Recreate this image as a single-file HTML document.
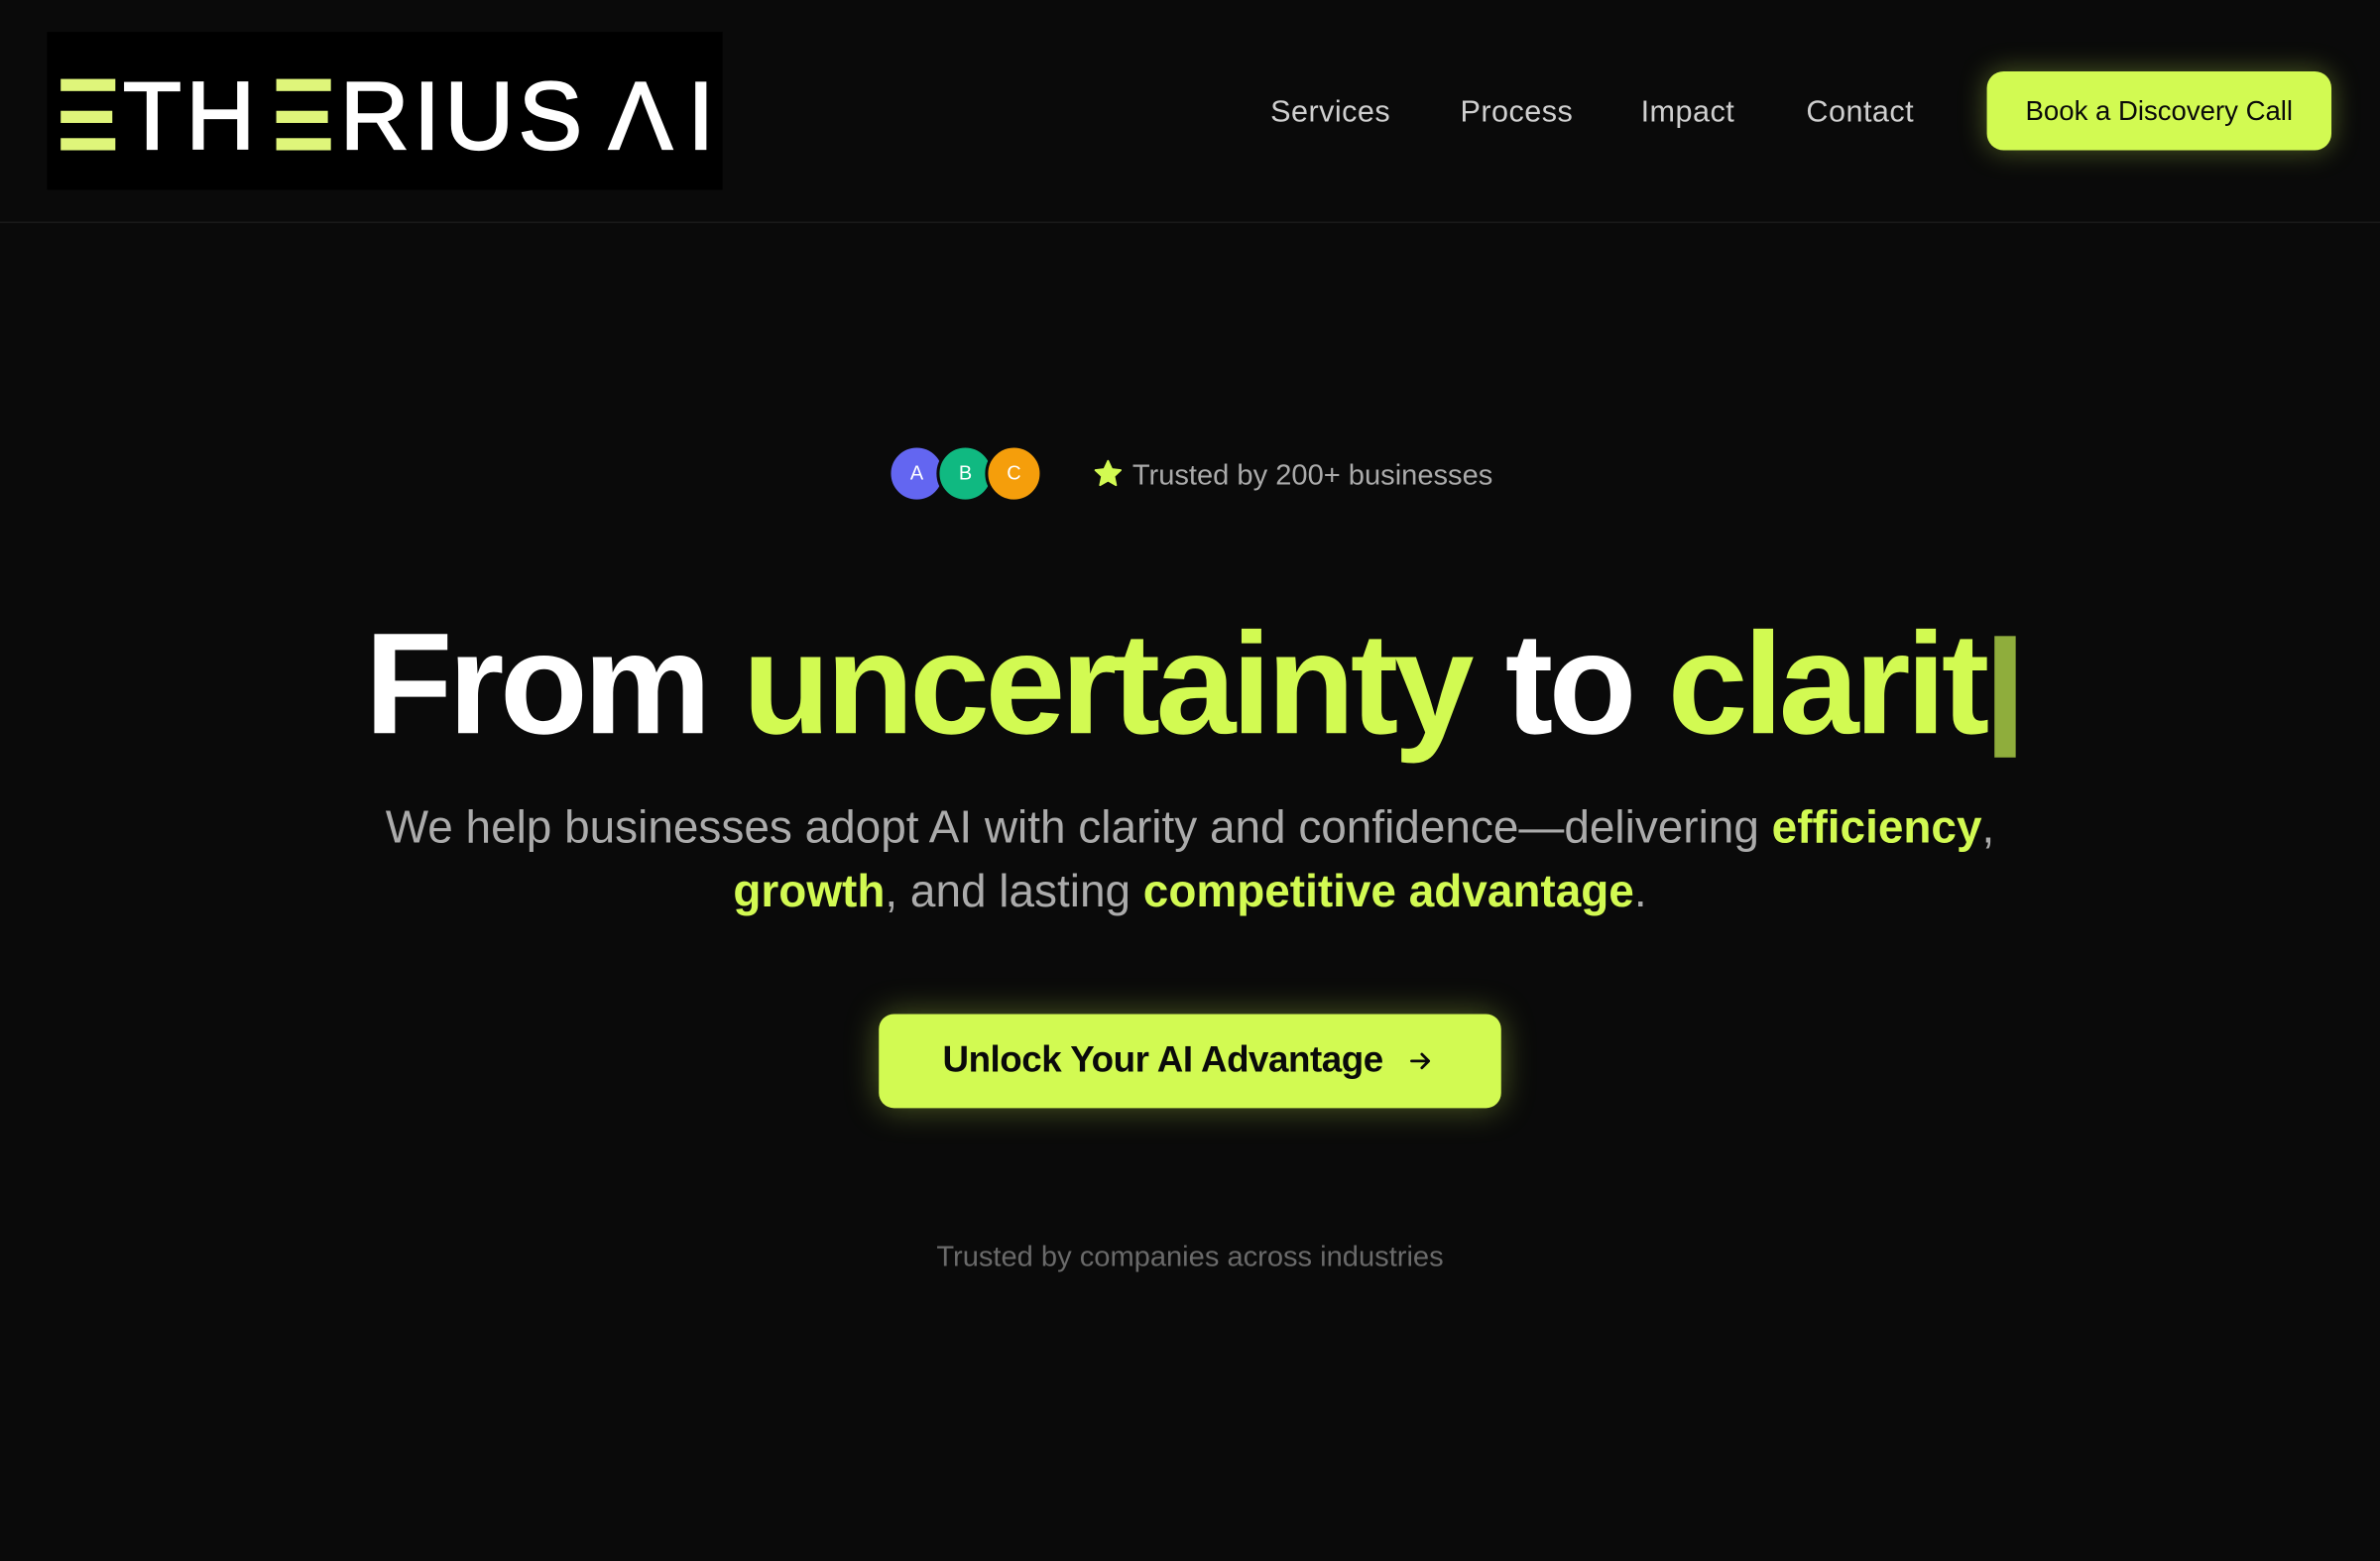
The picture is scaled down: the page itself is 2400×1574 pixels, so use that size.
<!DOCTYPE html>
<html><head><meta charset="utf-8"><style>
html,body{margin:0;padding:0;background:#0a0a0a;width:2400px;height:1574px;overflow:hidden}
#w{position:absolute;left:0;top:0;width:1568px;height:1028px;transform:scale(1.530612);transform-origin:0 0;font-family:"Liberation Sans",sans-serif;color:#fff}
.a{position:absolute}
.hdr{left:0;top:0;width:1568px;height:146px;border-bottom:1px solid #1a1a1a}
.logo{left:31px;top:21px;width:445px;height:104px;background:#000}
.logo span{position:absolute;top:25px;font-size:63px;line-height:63px;font-weight:400;letter-spacing:3px;-webkit-text-stroke:1.4px currentColor;white-space:nowrap}
.bar{position:absolute;height:8px;background:#dff57a}
.nav{top:63px;font-size:20px;color:#cfcfcf;letter-spacing:.3px}
.btn{left:1309px;top:47px;width:227px;height:52px;background:#d2fa52;border-radius:11px;color:#0a0a0a;font-size:18px;font-weight:500;text-align:center;line-height:52px;box-shadow:0 0 18px rgba(210,250,82,.35)}
.av{width:34px;height:34px;border-radius:50%;border:2px solid #0a0a0a;top:293px;font-size:13px;text-align:center;line-height:34px;color:#fff}
.l{color:#d2fa52}
h1{position:absolute;left:0;width:1568px;top:396px;margin:0;text-align:center;font-size:95px;font-weight:700;letter-spacing:-3px;line-height:110px}
.cur{display:inline-block;width:14px;height:80px;background:#8fad3c;vertical-align:-16px;margin-left:6px}
.sub{left:0;width:1568px;top:525px;text-align:center;font-size:30px;line-height:42px;color:#ababab;letter-spacing:0}
.sub b{color:#d2fa52}
.cta{left:579px;top:668px;width:410px;height:62px;background:#d2fa52;border-radius:10px;color:#0a0a0a;font-size:24px;font-weight:700;line-height:62px;box-shadow:0 0 22px rgba(210,250,82,.35);letter-spacing:-.3px}
</style></head><body><div id="w">
<div class="a hdr"></div>
<div class="a logo">
<div class="bar" style="left:9px;top:31px;width:36px"></div>
<div class="bar" style="left:9px;top:52px;width:34px"></div>
<div class="bar" style="left:9px;top:70px;width:36px"></div>
<span style="left:50px;color:#fff">TH</span>
<div class="bar" style="left:151px;top:31px;width:36px"></div>
<div class="bar" style="left:151px;top:52px;width:34px"></div>
<div class="bar" style="left:151px;top:70px;width:36px"></div>
<span style="left:193px;color:#fff">RIUS</span>
<span style="left:370px;color:#fff">Λ</span>
<span style="left:422px;color:#fff">I</span>
</div>
<div class="a nav" style="left:837px">Services</div>
<div class="a nav" style="left:962px">Process</div>
<div class="a nav" style="left:1081px">Impact</div>
<div class="a nav" style="left:1190px">Contact</div>
<div class="a btn">Book a Discovery Call</div>
<div class="a av" style="left:585px;background:#6366f1">A</div>
<div class="a av" style="left:617px;background:#10b981">B</div>
<div class="a av" style="left:649px;background:#f59e0b">C</div>
<svg class="a" style="left:720px;top:302px" width="20" height="20" viewBox="0 0 24 24"><path d="M12 2l3 6.5 7 .8-5.2 4.8 1.5 7L12 17.5 5.7 21.1l1.5-7L2 9.3l7-.8z" fill="#d2fa52" stroke="#d2fa52" stroke-width="1.5" stroke-linejoin="round"/></svg>
<div class="a" style="left:746px;top:302px;font-size:19px;color:#aaa;line-height:24px">Trusted by 200+ businesses</div>
<h1>From <span class="l">uncertainty</span> to <span class="l">clarit</span><span class="cur"></span></h1>
<div class="a sub">We help businesses adopt AI with clarity and confidence—delivering <b>efficiency</b>,<br><b>growth</b>, and lasting <b>competitive advantage</b>.</div>
<div class="a cta"><span class="a" style="left:42px;top:0">Unlock Your AI Advantage</span>
<svg class="a" style="left:348px;top:22px" width="18" height="18" viewBox="0 0 24 24"><path d="M4 12h15M13 6l6 6-6 6" fill="none" stroke="#0a0a0a" stroke-width="2.4" stroke-linecap="round" stroke-linejoin="round"/></svg></div>
<div class="a" style="left:0;width:1568px;top:818px;text-align:center;font-size:19px;color:#6a6a6a">Trusted by companies across industries</div>
</div></body></html>
